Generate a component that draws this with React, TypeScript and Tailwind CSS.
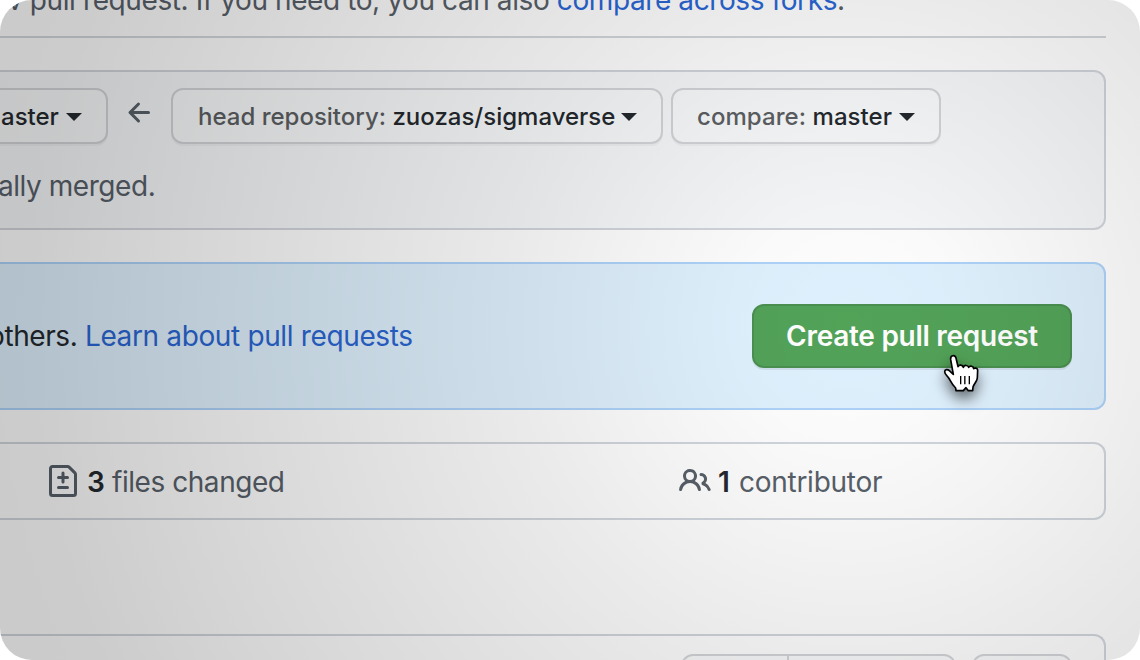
import type { ReactNode } from "react";

const ARROW_LEFT =
  "M7.78 12.53a.75.75 0 01-1.06 0L2.47 8.28a.75.75 0 010-1.06l4.25-4.25a.751.751 0 011.06 1.06L4.81 7h7.44a.75.75 0 010 1.5H4.81l2.97 2.97a.75.75 0 010 1.06z";
const FILE_DIFF =
  "M2.75 1.5a.25.25 0 00-.25.25v12.5c0 .138.112.25.25.25h10.5a.25.25 0 00.25-.25V4.664a.25.25 0 00-.073-.177l-2.914-2.914a.25.25 0 00-.177-.073H2.75zM1 1.75C1 .784 1.784 0 2.75 0h7.586c.464 0 .909.184 1.237.513l2.914 2.914c.329.328.513.773.513 1.237v9.586A1.75 1.75 0 0113.25 16H2.75A1.75 1.75 0 011 14.25V1.75zm7 1.5a.75.75 0 01.75.75v1.5h1.5a.75.75 0 010 1.5h-1.5v1.5a.75.75 0 01-1.5 0V7h-1.5a.75.75 0 010-1.5h1.5V4A.75.75 0 018 3.25zm-3 8a.75.75 0 01.75-.75h4.5a.75.75 0 010 1.5h-4.5a.75.75 0 01-.75-.75z";
const PEOPLE =
  "M5.5 3.5a2 2 0 100 4 2 2 0 000-4zM2 5.5a3.5 3.5 0 115.898 2.549 5.507 5.507 0 013.034 4.084.75.75 0 11-1.482.235 4.001 4.001 0 00-7.9 0 .75.75 0 01-1.482-.236A5.507 5.507 0 013.102 8.05 3.49 3.49 0 012 5.5zM11 4a.75.75 0 100 1.5 1.5 1.5 0 01.666 2.844.75.75 0 00-.416.672v.352a.75.75 0 00.574.73c1.2.289 2.162 1.2 2.522 2.372a.75.75 0 101.434-.44 5.01 5.01 0 00-2.56-3.012A3 3 0 0011 4z";

function Octicon({ path, className = "" }: { path: string; className?: string }) {
  return (
    <svg viewBox="0 0 16 16" className={`size-8 shrink-0 fill-[#586069] ${className}`}>
      <path d={path} />
    </svg>
  );
}

function Caret() {
  return (
    <svg viewBox="0 0 16 8" className="h-2 w-4 shrink-0 fill-[#24292e]">
      <path d="M0 0h16L8 8z" />
    </svg>
  );
}

function RefButton({ className, children }: { className: string; children: ReactNode }) {
  return (
    <button
      className={`flex h-14 shrink-0 items-center justify-between rounded-xl border-2 border-[#d3d5d8] bg-[#f9fafb] pt-0.5 pr-6 pl-6 text-2xl leading-none font-medium whitespace-nowrap text-[#24292e] shadow-[0_2px_0_rgba(27,31,35,0.04)] ${className}`}
    >
      {children}
      <Caret />
    </button>
  );
}

function HandCursor() {
  return (
    <svg
      viewBox="120 66 129 132"
      className="absolute top-[352px] left-[940px] h-11 w-[43px] overflow-visible drop-shadow-[0_7px_7px_rgba(0,0,0,0.55)]"
    >
      <path
        d="M168 182 L167 174 C158 166 153 156 148 147 C143 139 134 132 134 125 C134 118 143 117 148 122 L160 133 L152 89 C150 75 165 73 168 84 L174 110 C177 103 188 104 190 112 C193 104 204 105 206 112 C210 106 220 108 221 116 C226 112 233 115 233 121 L232 144 C231 155 221 163 219 171 L218 182 L205 182 L198 173 L190 182 Z"
        fill="#fff"
        stroke="#000"
        strokeWidth="5"
        strokeLinejoin="round"
      />
      <path d="M182 138v25M194.500 138v25M208 138v25" stroke="#000" strokeWidth="4" />
    </svg>
  );
}

export default function App() {
  return (
    <div className="relative flex h-[660px] w-[1140px] flex-col overflow-hidden rounded-[32px] bg-white pr-[34px] font-[Inter,sans-serif] text-[28px] text-[#586069]">
      <header className="flex h-[38px] shrink-0 items-start border-b-2 border-[#d3d7dc]">
        <p className="-mt-[17px] ml-[7px] leading-[34px] tracking-[-0.4px] whitespace-nowrap">
          v pull request. If you need to, you can also{" "}
          <a className="text-[#2a66d4]">compare across forks</a>.
        </p>
      </header>

      <section className="mt-8 flex h-40 shrink-0 flex-col rounded-r-xl border-2 border-l-0 border-[#d2d5dc] bg-[#f6f8fa]">
        <div className="mt-4 flex">
          <RefButton className="-ml-[25px] w-[133px] rounded-l-none">
            <span>aster</span>
          </RefButton>
          <Octicon path={ARROW_LEFT} className="mt-[9px] ml-4" />
          <RefButton className="ml-[15px] w-[492px]">
            <span className="ml-px">
              <span className="text-[#5c5f63]">head repository: </span>zuozas/sigmaverse
            </span>
          </RefButton>
          <RefButton className="ml-2 w-[270px]">
            <span className="tracking-[0.06px]">
              <span className="text-[#5c5f63]">compare: </span>master
            </span>
          </RefButton>
        </div>
        <p className="mt-[25px] -ml-0.5 leading-[34px] tracking-[-0.45px]">ally merged.</p>
      </section>

      <section className="mt-8 flex h-[148px] shrink-0 items-center justify-between rounded-r-xl border-2 border-l-0 border-[#aed3fa] bg-[#e0f2ff] pr-8">
        <p className="-ml-3 whitespace-nowrap">
          <span className="tracking-[-0.4px] text-[#24292e]">others. </span>
          <a className="tracking-[-0.36px] text-[#2a66d4]">Learn about pull requests</a>
        </p>
        <button className="flex h-16 w-80 items-center justify-center rounded-xl border-2 border-[#4a9050] bg-[#53a359] font-semibold whitespace-nowrap text-white shadow-[0_2px_0_rgba(27,31,35,0.08)]">
          <span className="tracking-[-0.28px]">Create pull request</span>
        </button>
      </section>

      <section className="mt-8 flex h-[78px] shrink-0 items-center rounded-r-xl border-2 border-l-0 border-[#d1d7de]">
        <div className="ml-[47px] flex w-[632px] items-center whitespace-nowrap">
          <Octicon path={FILE_DIFF} />
          <strong className="ml-2 w-[25px] pt-px font-semibold text-[#24292e]">3</strong>
          <span className="pt-px tracking-[-0.45px]">files changed</span>
        </div>
        <div className="flex items-center whitespace-nowrap">
          <Octicon path={PEOPLE} />
          <strong className="ml-[7px] w-[21px] pt-px font-semibold text-[#24292e]">1</strong>
          <span className="pt-px tracking-[-0.27px]">contributor</span>
        </div>
      </section>

      <section className="mt-[114px] flex h-20 shrink-0 justify-end rounded-tr-xl border-t-2 border-r-2 border-[#d1d7de] pt-[18px] pr-8">
        <div className="flex h-14 w-[275px] rounded-xl border-2 border-[#d3d5d8] bg-[#fafbfc]">
          <div className="w-[106px] border-r-2 border-[#d3d5d8]" />
        </div>
        <div className="ml-4 h-14 w-[100px] rounded-xl border-2 border-[#d3d5d8] bg-[#fafbfc]" />
      </section>

      <div className="pointer-events-none absolute inset-0 bg-[radial-gradient(circle_1000px_at_850px_325px,rgba(0,0,0,0.008)_0%,rgba(0,0,0,0.02)_11%,rgba(0,0,0,0.05)_23%,rgba(0,0,0,0.082)_34%,rgba(0,0,0,0.13)_53%,rgba(0,0,0,0.2)_82%,rgba(0,0,0,0.21)_100%)]" />
      <HandCursor />
    </div>
  );
}
